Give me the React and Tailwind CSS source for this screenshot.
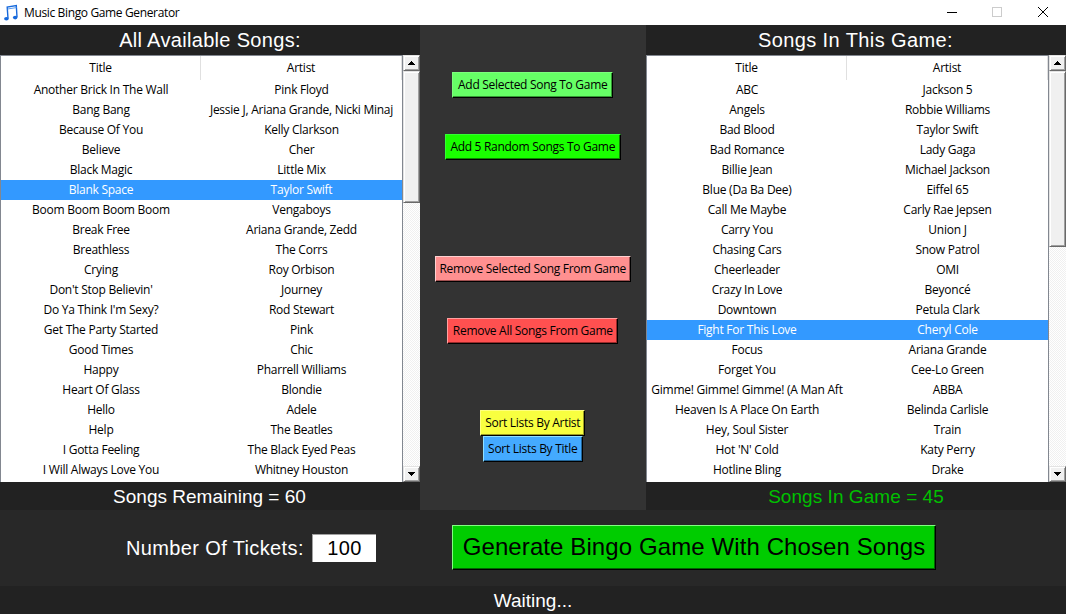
const available = [
  ["Another Brick In The Wall", "Pink Floyd"],
  ["Bang Bang", "Jessie J, Ariana Grande, Nicki Minaj"],
  ["Because Of You", "Kelly Clarkson"],
  ["Believe", "Cher"],
  ["Black Magic", "Little Mix"],
  ["Blank Space", "Taylor Swift"],
  ["Boom Boom Boom Boom", "Vengaboys"],
  ["Break Free", "Ariana Grande, Zedd"],
  ["Breathless", "The Corrs"],
  ["Crying", "Roy Orbison"],
  ["Don't Stop Believin'", "Journey"],
  ["Do Ya Think I'm Sexy?", "Rod Stewart"],
  ["Get The Party Started", "Pink"],
  ["Good Times", "Chic"],
  ["Happy", "Pharrell Williams"],
  ["Heart Of Glass", "Blondie"],
  ["Hello", "Adele"],
  ["Help", "The Beatles"],
  ["I Gotta Feeling", "The Black Eyed Peas"],
  ["I Will Always Love You", "Whitney Houston"],
];

const chosen = [
  ["ABC", "Jackson 5"],
  ["Angels", "Robbie Williams"],
  ["Bad Blood", "Taylor Swift"],
  ["Bad Romance", "Lady Gaga"],
  ["Billie Jean", "Michael Jackson"],
  ["Blue (Da Ba Dee)", "Eiffel 65"],
  ["Call Me Maybe", "Carly Rae Jepsen"],
  ["Carry You", "Union J"],
  ["Chasing Cars", "Snow Patrol"],
  ["Cheerleader", "OMI"],
  ["Crazy In Love", "Beyoncé"],
  ["Downtown", "Petula Clark"],
  ["Fight For This Love", "Cheryl Cole"],
  ["Focus", "Ariana Grande"],
  ["Forget You", "Cee-Lo Green"],
  ["Gimme! Gimme! Gimme! (A Man Aft", "ABBA"],
  ["Heaven Is A Place On Earth", "Belinda Carlisle"],
  ["Hey, Soul Sister", "Train"],
  ["Hot 'N' Cold", "Katy Perry"],
  ["Hotline Bling", "Drake"],
];

function ArrowButton({ down }) {
  return (
    <div className="flex h-4 w-full shrink-0 items-center justify-center border border-t-[#e3e3e3] border-l-[#e3e3e3] border-r-[#696969] border-b-[#696969] bg-[#f0f0f0] shadow-[inset_1px_1px_0_#fff,inset_-1px_-1px_0_#a0a0a0]">
      <svg width="7" height="4" viewBox="0 0 7 4" shapeRendering="crispEdges">
        <path d={down ? "M0 0h7v1h-1v1h-1v1h-1v1h-1v-1h-1v-1h-1v-1h-1z" : "M3 0h1v1h1v1h1v1h1v1h-7v-1h1v-1h1v-1h1z"} fill="#000" />
      </svg>
    </div>
  );
}

function SongList({ rows, selected, thumb }) {
  return (
    <div className="flex h-[427px] bg-white">
      <div className="flex w-[403px] flex-col border-t border-r border-l border-[#828790] font-['Open_Sans','Noto_Sans',sans-serif] text-[12px] leading-5 tracking-[-0.25px] text-black">
        <div className="flex h-6 shrink-0 text-center leading-6">
          <div className="w-[200px] border-r border-[#e0e0e0]">Title</div>
          <div className="w-[201px] border-r border-[#e0e0e0]">Artist</div>
        </div>
        {rows.map(([title, artist], i) => (
          <div key={title} className={i === selected ? "flex h-5 shrink-0 bg-[#3399ff] text-center text-white" : "flex h-5 shrink-0 text-center"}>
            <div className="w-[200px] overflow-hidden whitespace-nowrap">{title}</div>
            <div className="w-[201px] overflow-hidden whitespace-nowrap">{artist}</div>
          </div>
        ))}
      </div>
      <div className="flex w-[17px] flex-col bg-[#f6f6f6] bg-[repeating-conic-gradient(#fff_0_25%,#f0f0f0_0_50%)] bg-size-[2px_2px]">
        <ArrowButton />
        <div className={`${thumb} w-full shrink-0 border border-t-[#e3e3e3] border-l-[#e3e3e3] border-r-[#696969] border-b-[#696969] bg-[#f0f0f0] shadow-[inset_1px_1px_0_#fff,inset_-1px_-1px_0_#a0a0a0]`} />
        <div className="grow" />
        <ArrowButton down />
      </div>
    </div>
  );
}

function Button({ className, children }) {
  return (
    <button className={`${className} flex h-[26px] shrink-0 items-center justify-center border border-r-black border-b-black pb-px font-['Open_Sans','Noto_Sans',sans-serif] text-[12px] tracking-[-0.29px] whitespace-nowrap text-black`}>
      {children}
    </button>
  );
}

export default function App() {
  return (
    <div className="flex h-[614px] w-[1066px] flex-col overflow-hidden bg-[#282828] font-['Liberation_Sans',Arial,sans-serif] text-white">
      <header className="flex h-[25px] shrink-0 items-center bg-white text-black">
        <svg className="ml-[3px]" width="16" height="18" viewBox="0 0 16 18" fill="none">
          <path d="M5 14.5L4.2 3L13.3 1.5L14 13" stroke="#1769dc" strokeWidth="1.4" />
          <path d="M4.6 5L13.4 3.6" stroke="#5b9cf0" strokeWidth="1" />
          <ellipse cx="3.4" cy="14.7" rx="2.3" ry="1.8" fill="#1769dc" />
          <ellipse cx="12.2" cy="13.6" rx="2.3" ry="1.8" fill="#1769dc" />
        </svg>
        <span className="ml-[5px] font-['Open_Sans','Noto_Sans',sans-serif] text-[12px] tracking-[-0.36px]">Music Bingo Game Generator</span>
        <svg className="ml-auto" width="120" height="25" viewBox="0 0 120 25" fill="none" shapeRendering="crispEdges">
          <path d="M1 12.5h10" stroke="#000" />
          <rect x="46.5" y="7.5" width="9" height="9" stroke="#ccc" />
          <path d="M92 7l10 10M102 7L92 17" stroke="#000" shapeRendering="auto" />
        </svg>
      </header>

      <main className="flex h-[485px] shrink-0">
        <section className="w-[420px] bg-[#222]">
          <h2 className="h-[30px] text-center text-[20px] leading-[30px] tracking-[0.32px]">All Available Songs:</h2>
          <SongList rows={available} selected={5} thumb="h-[132px]" />
          <p className="h-7 pr-px text-center text-[19px] leading-[30px]">Songs Remaining = 60</p>
        </section>

        <section className="flex w-[226px] flex-col items-center bg-[#333] pt-[47px] pr-[0.5px]">
          <Button className="w-[161px] border-t-[#7dff7d] border-l-[#7dff7d] bg-[#66ff66] shadow-[inset_-1px_-1px_0_#339933]">Add Selected Song To Game</Button>
          <Button className="mt-9 w-[176px] border-t-[#33ff33] border-l-[#33ff33] bg-[#1aff00] shadow-[inset_-1px_-1px_0_#0d8800]">Add 5 Random Songs To Game</Button>
          <Button className="mt-24 w-[196px] border-t-[#ffd0d0] border-l-[#ffd0d0] bg-[#ff9090] shadow-[inset_-1px_-1px_0_#a05050]">Remove Selected Song From Game</Button>
          <Button className="mt-9 w-[171px] border-t-[#ffa0a0] border-l-[#ffa0a0] bg-[#ff5050] shadow-[inset_-1px_-1px_0_#992a2a]">Remove All Songs From Game</Button>
          <Button className="mt-[66px] w-[105px] border-t-[#ffff80] border-l-[#ffff80] bg-[#f8ff40] shadow-[inset_-1px_-1px_0_#999922]">Sort Lists By Artist</Button>
          <Button className="w-[100px] border-t-[#90e0ff] border-l-[#90e0ff] bg-[#44aaff] shadow-[inset_-1px_-1px_0_#226699]">Sort Lists By Title</Button>
        </section>

        <section className="w-[420px] bg-[#222]">
          <h2 className="h-[30px] pr-px text-center text-[20px] leading-[30px] tracking-[0.4px]">Songs In This Game:</h2>
          <SongList rows={chosen} selected={12} thumb="h-[176px]" />
          <p className="h-7 text-center text-[19px] leading-[30px] tracking-[0.05px] text-[#00c000]">Songs In Game = 45</p>
        </section>
      </main>

      <section className="flex h-[76px] shrink-0 items-start bg-[#282828]">
        <label className="ml-[126px] w-[186px] pt-[23px] text-[20px] leading-[30px] tracking-[0.37px] whitespace-nowrap">Number Of Tickets:</label>
        <div className="mt-6 h-7 w-16 border-t border-l border-[#a0a0a0] bg-white text-center text-[20px] leading-[27px] tracking-[0.4px] text-black">100</div>
        <button className="mt-[15px] ml-[76px] h-[45px] w-[484px] border border-t-[#80ff80] border-l-[#80ff80] border-r-black border-b-black bg-[#00cc00] pb-[2px] text-[24px] tracking-[0.1px] whitespace-nowrap text-black shadow-[inset_-1px_-1px_0_#006600]">Generate Bingo Game With Chosen Songs</button>
      </section>

      <footer className="h-7 shrink-0 bg-[#222] text-center text-[19px] leading-[30px]">Waiting...</footer>
    </div>
  );
}
